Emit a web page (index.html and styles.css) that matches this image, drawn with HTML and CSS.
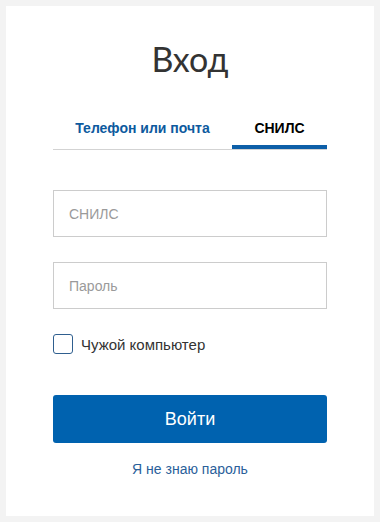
FILE: index.html
```html
<html>
  <head>
    <title>Вход</title>
    <link rel="stylesheet" href="styles.css">
  </head>
  <body>
  <div class="card">
    <h1 class="title">Вход</h1>
    <div class="tabs">
      <div class="tab">Телефон или почта</div>
      <div class="tab tab_active">СНИЛС</div>
    </div>
    <form class="loginForm">
      <input type="text" class="field" placeholder="СНИЛС"/>
      <input type="password" class="field field_pw" placeholder="Пароль"/>
      <label class="check">
        <span class="checkBox"></span>
        <span class="checkText">Чужой компьютер</span>
      </label>
      <button type="button" class="submitBtn">Войти</button>
      <a class="forgot" href="#">Я не знаю пароль</a>
    </form>
  </div>
  </body>
</html>
```

FILE: styles.css
```css
body{
    margin: 0;
    background-color: #f3f3f3;
    font-family: "Liberation Sans", Arial, sans-serif;
}
.card{
    margin: 6px;
    height: 510px;
    box-sizing: border-box;
    background-color: #ffffff;
    padding: 33px 47px 0 47px;
}
.title{
    margin: 0;
    font-family: "Lato", "Liberation Sans", sans-serif;
    font-weight: normal;
    font-size: 34px;
    line-height: 40px;
    color: #333333;
    text-align: center;
}
.tabs{
    display: flex;
    margin-top: 41px;
    border-bottom: 1px solid #d3d3d3;
}
.tab{
    width: 179px;
    font-size: 14px;
    font-weight: bold;
    line-height: 16px;
    padding-bottom: 13px;
    text-align: center;
    color: #0d5a9e;
}
.tab_active{
    flex: 1;
    color: #000000;
    padding-bottom: 9px;
    border-bottom: 4px solid #0d5fa8;
}
.loginForm{
    display: flex;
    flex-direction: column;
    margin: 0;
}
.field{
    margin-top: 40px;
    height: 47px;
    box-sizing: border-box;
    border: 1px solid #cccccc;
    padding: 0 15px;
    font-family: "Liberation Sans", Arial, sans-serif;
    font-size: 14px;
    color: #333333;
    outline: none;
}
.field::placeholder{
    color: #9a9a9a;
}
.field_pw{
    margin-top: 25px;
}
.check{
    display: flex;
    align-items: center;
    margin-top: 25px;
    height: 20px;
}
.checkBox{
    width: 20px;
    height: 20px;
    box-sizing: border-box;
    border: 1px solid #2f5f8f;
    border-radius: 3px;
}
.checkText{
    margin-left: 8px;
    font-size: 15px;
    color: #333333;
}
.submitBtn{
    margin-top: 41px;
    height: 48px;
    border: none;
    border-radius: 3px;
    background-color: #0062af;
    color: #ffffff;
    font-family: "Liberation Sans", Arial, sans-serif;
    font-size: 18px;
}
.forgot{
    margin-top: 18px;
    font-size: 14px;
    line-height: 16px;
    text-align: center;
    color: #2a609a;
    text-decoration: none;
}
```
